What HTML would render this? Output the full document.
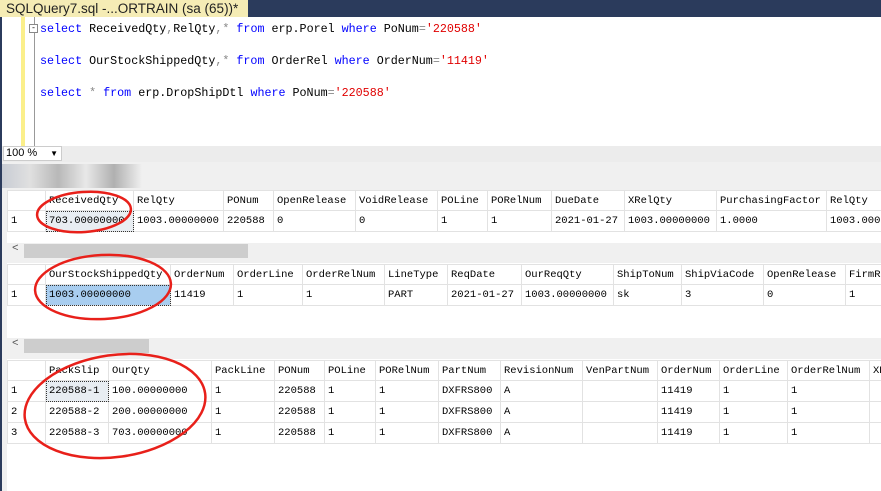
<!DOCTYPE html>
<html><head><meta charset="utf-8"><style>
*{margin:0;padding:0;box-sizing:border-box}
body{width:881px;height:491px;overflow:hidden;background:#2b3b5c;position:relative;font-family:"Liberation Mono","Noto Sans CJK SC",monospace}
.abs{position:absolute}
#tab{left:0;top:0;width:248px;height:17px;background:#f5ecb5;font:13.5px "Liberation Sans","Noto Sans CJK SC",sans-serif;color:#222;padding:0 0 0 6px;line-height:17px}
#ed{left:2px;top:17px;width:879px;height:129px;background:#fff}
#ybar{left:21px;top:17px;width:4px;height:129px;background:#fbef8a}
#fold{left:34px;top:17px;width:1px;height:129px;background:#999}
.code{left:40px;font-size:11.7px;color:#000;white-space:pre}
.k{color:#0000ff}.s{color:#e00000}.g{color:#888}
#zoom{left:2px;top:146px;width:879px;height:16px;background:#ececec}
#zsel{left:3px;top:146px;width:59px;height:15px;background:#fff;border:1px solid #ccc;font:11px "Liberation Sans",sans-serif;padding-left:2px;line-height:13px}
#res{left:2px;top:162px;width:879px;height:329px;background:#f0f0f0}
table{position:absolute;border-collapse:collapse;table-layout:fixed;background:#fff;font-size:10.5px}
td{border:1px solid #e2e2e2;height:21px;padding:0 3px;white-space:nowrap;overflow:hidden}
tr.h td{height:20px;padding-left:3px}
.sel{background:#e8edf2;outline:1px dotted #333;outline-offset:-1px}
.sel2{background:#a8cdef;outline:1px dotted #333;outline-offset:-1px}
.panel{background:#fff;left:7px;width:874px}
.sb{left:7px;width:874px;height:16px;background:#f0f0f0}
.thumb{height:14px;background:#cdcdcd;top:1px}
</style></head><body>
<div id="tab" class="abs">SQLQuery7.sql -...ORTRAIN (sa (65))* <span style="color:#666;margin-left:8px">✕</span></div>
<div id="ed" class="abs"></div>
<div id="ybar" class="abs"></div>
<div id="fold" class="abs"></div>
<div class="abs" style="left:29px;top:24px;width:9px;height:9px;border:1px solid #888;background:#fff;font-size:8px;line-height:7px;text-align:center">-</div>
<div class="abs code" style="top:22px"><span class="k">select</span> ReceivedQty<span class="g">,</span>RelQty<span class="g">,*</span> <span class="k">from</span> erp.Porel <span class="k">where</span> PoNum<span class="g">=</span><span class="s">'220588'</span></div>
<div class="abs code" style="top:54px"><span class="k">select</span> OurStockShippedQty<span class="g">,*</span> <span class="k">from</span> OrderRel <span class="k">where</span> OrderNum<span class="g">=</span><span class="s">'11419'</span></div>
<div class="abs code" style="top:86px"><span class="k">select</span> <span class="g">*</span> <span class="k">from</span> erp.DropShipDtl <span class="k">where</span> PoNum<span class="g">=</span><span class="s">'220588'</span></div>
<div id="zoom" class="abs"></div>
<div id="zsel" class="abs">100 % <span style="float:right;font-size:8px;margin-right:3px">▼</span></div>
<div id="res" class="abs"></div>
<div class="abs" style="left:2px;top:164px;width:140px;height:24px;background:linear-gradient(90deg,#c8ccd4,#e0e0e0,#b8b8b8,#e8e8e8,#b0b0b0,#f0f0f0)"></div>
<div class="abs panel" style="top:190px;height:53px"></div>
<div class="abs sb" style="top:243px"><span class="abs" style="left:5px;top:0;font-size:11px;color:#555">&lt;</span><div class="abs thumb" style="left:17px;width:224px"></div></div>
<div class="abs panel" style="top:263px;height:75px"></div>
<div class="abs sb" style="top:338px"><span class="abs" style="left:5px;top:0;font-size:11px;color:#555">&lt;</span><div class="abs thumb" style="left:17px;width:125px"></div></div>
<div class="abs panel" style="top:359px;height:132px"></div>

<table style="left:7px;top:190px;width:900px">
<colgroup><col style="width:38px"><col style="width:88px"><col style="width:90px"><col style="width:50px"><col style="width:82px"><col style="width:82px"><col style="width:50px"><col style="width:64px"><col style="width:73px"><col style="width:92px"><col style="width:110px"><col style="width:81px"></colgroup>
<tr class="h"><td></td><td>ReceivedQty</td><td>RelQty</td><td>PONum</td><td>OpenRelease</td><td>VoidRelease</td><td>POLine</td><td>PORelNum</td><td>DueDate</td><td>XRelQty</td><td>PurchasingFactor</td><td>RelQty</td></tr>
<tr><td>1</td><td class="sel">703.00000000</td><td>1003.00000000</td><td>220588</td><td>0</td><td>0</td><td>1</td><td>1</td><td>2021-01-27</td><td>1003.00000000</td><td>1.0000</td><td>1003.00000000</td></tr>
</table>

<table style="left:7px;top:264px;width:900px">
<colgroup><col style="width:38px"><col style="width:125px"><col style="width:63px"><col style="width:69px"><col style="width:82px"><col style="width:63px"><col style="width:74px"><col style="width:92px"><col style="width:68px"><col style="width:82px"><col style="width:82px"><col style="width:62px"></colgroup>
<tr class="h"><td></td><td>OurStockShippedQty</td><td>OrderNum</td><td>OrderLine</td><td>OrderRelNum</td><td>LineType</td><td>ReqDate</td><td>OurReqQty</td><td>ShipToNum</td><td>ShipViaCode</td><td>OpenRelease</td><td>FirmRelease</td></tr>
<tr><td>1</td><td class="sel2">1003.00000000</td><td>11419</td><td>1</td><td>1</td><td>PART</td><td>2021-01-27</td><td>1003.00000000</td><td>sk</td><td>3</td><td>0</td><td>1</td></tr>
</table>

<table style="left:7px;top:360px;width:900px">
<colgroup><col style="width:38px"><col style="width:63px"><col style="width:103px"><col style="width:63px"><col style="width:50px"><col style="width:51px"><col style="width:63px"><col style="width:62px"><col style="width:82px"><col style="width:75px"><col style="width:62px"><col style="width:68px"><col style="width:82px"><col style="width:38px"></colgroup>
<tr class="h"><td></td><td>PackSlip</td><td>OurQty</td><td>PackLine</td><td>PONum</td><td>POLine</td><td>PORelNum</td><td>PartNum</td><td>RevisionNum</td><td>VenPartNum</td><td>OrderNum</td><td>OrderLine</td><td>OrderRelNum</td><td>XPart</td></tr>
<tr><td>1</td><td class="sel">220588-1</td><td>100.00000000</td><td>1</td><td>220588</td><td>1</td><td>1</td><td>DXFRS800</td><td>A</td><td></td><td>11419</td><td>1</td><td>1</td><td></td></tr>
<tr><td>2</td><td>220588-2</td><td>200.00000000</td><td>1</td><td>220588</td><td>1</td><td>1</td><td>DXFRS800</td><td>A</td><td></td><td>11419</td><td>1</td><td>1</td><td></td></tr>
<tr><td>3</td><td>220588-3</td><td>703.00000000</td><td>1</td><td>220588</td><td>1</td><td>1</td><td>DXFRS800</td><td>A</td><td></td><td>11419</td><td>1</td><td>1</td><td></td></tr>
</table>

<svg class="abs" style="left:0;top:0" width="881" height="491">
<g fill="none" stroke="#e8201a" stroke-width="2.5">
<ellipse cx="84" cy="212" rx="47" ry="20" transform="rotate(-4 84 212)"/>
<ellipse cx="103" cy="287" rx="68" ry="32" transform="rotate(-3 103 287)"/>
<ellipse cx="115" cy="406" rx="91" ry="51" transform="rotate(-8 115 406)"/>
</g></svg>
</body></html>
